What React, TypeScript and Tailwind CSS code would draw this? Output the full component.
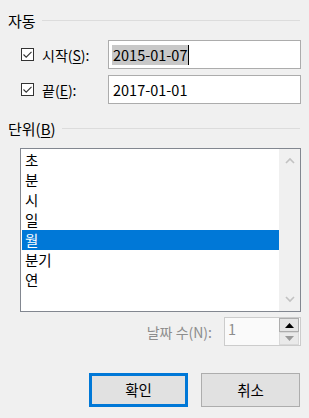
import React from "react";

const font = { fontFamily: '"Noto Sans CJK KR", "Noto Sans", sans-serif' };

const Check = () => (
  <div className="w-[13px] h-[13px] border border-[#333333] bg-white flex items-center justify-center shrink-0">
    <svg width="11" height="11" viewBox="0 0 11 11">
      <path d="M1.5 5.5 L4.2 8.2 L9.5 2.8" fill="none" stroke="#333333" strokeWidth="1.1" />
    </svg>
  </div>
);

const GroupHeader = ({ children }: { children: React.ReactNode }) => (
  <div className="flex items-center h-[20px] pl-[8px] pr-[9px]">
    <span className="text-[15px] leading-none text-black">{children}</span>
    <div className="flex-1 h-px bg-[#dcdcdc] ml-[6px] mt-[1px]" />
  </div>
);

export default function App() {
  const units = ["초", "분", "시", "일", "월", "분기", "연"];
  return (
    <div style={font} className="w-[309px] h-[418px] bg-[#f0f0f0] overflow-hidden text-black">
      <div className="pt-[10px]">
        <GroupHeader>자동</GroupHeader>
      </div>

      <div className="flex items-center mt-[10px] pl-[21px] h-[29px]">
        <Check />
        <span className="ml-[8px] w-[66px] text-[14px] leading-none">
          시작(<span className="underline underline-offset-2">S</span>):
        </span>
        <div className="w-[193px] h-[29px] border border-[#acacac] bg-white flex items-center pl-[3px]">
          <span className="bg-[#c8c8c8] text-[14.5px] leading-[20px] px-[1px]">2015-01-07</span>
          <span className="w-px h-[20px] bg-black" />
        </div>
      </div>

      <div className="flex items-center mt-[6px] pl-[21px] h-[29px]">
        <Check />
        <span className="ml-[8px] w-[66px] text-[14px] leading-none">
          끝(<span className="underline underline-offset-2">E</span>):
        </span>
        <div className="w-[193px] h-[29px] border border-[#acacac] bg-white flex items-center pl-[4px]">
          <span className="text-[14.5px] leading-[20px]">2017-01-01</span>
        </div>
      </div>

      <div className="mt-[14px]">
        <GroupHeader>
          단위(<span className="underline underline-offset-2">B</span>)
        </GroupHeader>
      </div>

      <div className="ml-[20px] mt-[10px] w-[281px] h-[164px] border border-[#828790] bg-white flex">
        <div className="flex-1 pt-[1px] pl-[1px]">
          {units.map((u) => (
            <div
              key={u}
              className={
                "h-[20px] flex items-center pl-[3px] text-[14.5px] leading-none " +
                (u === "월" ? "bg-[#0078d7] text-white" : "")
              }
            >
              {u}
            </div>
          ))}
        </div>
        <div className="w-[21px] bg-[#f0f0f0] flex flex-col items-center justify-between py-[8px]">
          <svg width="10" height="7" viewBox="0 0 10 7">
            <path d="M1 6 L5 2 L9 6" fill="none" stroke="#c2c2c2" strokeWidth="1.6" />
          </svg>
          <svg width="10" height="7" viewBox="0 0 10 7">
            <path d="M1 1 L5 5 L9 1" fill="none" stroke="#c2c2c2" strokeWidth="1.6" />
          </svg>
        </div>
      </div>

      <div className="flex items-center justify-end mt-[5px] pr-[8px] h-[29px]">
        <span className="text-[14px] leading-none text-[#8d8d8d] mr-[12px]">날짜 수(N):</span>
        <div className="w-[77px] h-[29px] border border-[#cccccc] bg-[#fafafa] flex">
          <div className="flex-1 pl-[3px] pt-[4px] text-[14.5px] leading-none text-[#8d8d8d]">1</div>
          <div className="w-[20px] flex flex-col my-[0px] mr-[1px]">
            <div className="h-[14px] border border-[#adadad] bg-[#e5e5e5] flex items-center justify-center">
              <svg width="9" height="5" viewBox="0 0 9 5">
                <path d="M0 5 L4.5 0 L9 5 Z" fill="#000000" />
              </svg>
            </div>
            <div className="h-[13px] border border-[#d9d9d9] bg-[#eaeaea] flex items-center justify-center">
              <svg width="9" height="5" viewBox="0 0 9 5">
                <path d="M0 0 L4.5 5 L9 0 Z" fill="#9a9a9a" />
              </svg>
            </div>
          </div>
        </div>
      </div>

      <div className="flex mt-[27px] pl-[89px] gap-[13px]">
        <button className="w-[99px] h-[34px] border-[3px] border-[#0078d7] bg-[#e1e1e1] text-[14.5px] leading-none">
          확인
        </button>
        <button className="w-[99px] h-[34px] border border-[#adadad] bg-[#e1e1e1] text-[14.5px] leading-none">
          취소
        </button>
      </div>
    </div>
  );
}
